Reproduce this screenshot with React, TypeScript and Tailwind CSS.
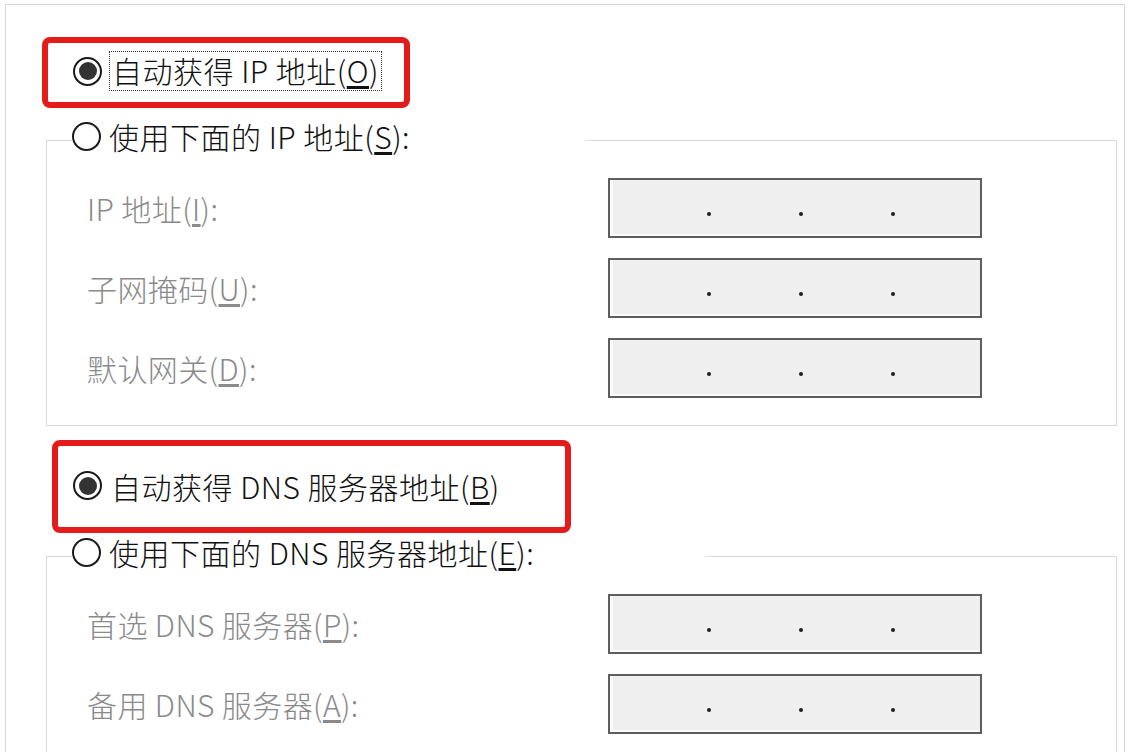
import React from "react";

const font = { fontFamily: '"Noto Sans CJK SC", "Noto Sans", sans-serif' };

function Radio({ checked }: { checked?: boolean }) {
  return (
    <span className="flex h-[29px] w-[29px] shrink-0 items-center justify-center rounded-full border-2 border-[#1a1a1a] bg-white">
      {checked && <span className="h-[18px] w-[18px] rounded-full bg-[#333]" />}
    </span>
  );
}

function IpBox() {
  return (
    <div className="flex h-[60px] w-[374px] items-center gap-[88px] border-2 border-[#5e5e5e] bg-[#efefef] pl-[97px] pt-[12px] shadow-[inset_3px_-2px_0_#fafafa]">
      <span className="h-[4px] w-[4px] rounded-full bg-[#1e1e1e]" />
      <span className="h-[4px] w-[4px] rounded-full bg-[#1e1e1e]" />
      <span className="h-[4px] w-[4px] rounded-full bg-[#1e1e1e]" />
    </div>
  );
}

function Field({ label, keyChar }: { label: string; keyChar: string }) {
  return (
    <div className="flex items-center pl-[15px]">
      <span className="w-[521px] text-[30px] font-light leading-none tracking-[0.4px] text-[#8a8a8a]">
        {label}(<span className="underline underline-offset-[3px]">{keyChar}</span>):
      </span>
      <IpBox />
    </div>
  );
}

function Group({
  legend,
  keyChar,
  legendWidth,
  fields,
}: {
  legend: string;
  keyChar: string;
  legendWidth: string;
  fields: { label: string; key: string }[];
}) {
  return (
    <fieldset className="ml-[40px] w-[1071px] border border-[#dadada] pb-[27px] pl-[25px] pt-[15px]">
      <legend className={`flex h-[46px] items-center gap-[8px] bg-white pb-[8px] ${legendWidth}`}>
        <Radio />
        <span className="text-[30px] font-light leading-none tracking-[0.5px] text-[#111]">
          {legend}(<span className="underline underline-offset-[3px]">{keyChar}</span>):
        </span>
      </legend>
      <div className="flex flex-col gap-[20px]">
        {fields.map((f) => (
          <Field key={f.key} label={f.label} keyChar={f.key} />
        ))}
      </div>
    </fieldset>
  );
}

export default function App() {
  return (
    <div className="relative h-[752px] w-[1128px] overflow-hidden bg-white pl-[5px] pr-[3px] pt-[4px]" style={font}>
      <div className="h-[800px] border-l border-r border-t border-[#d6d6d6]">
        {/* IP section */}
        <div className="mt-[46px] flex h-[40px] items-center gap-[7px] pl-[67px]">
          <Radio checked />
          <span className="flex h-[40px] items-center border border-dotted border-[#333] px-[2px] pb-[2px] text-[30px] font-light leading-none tracking-[0.5px] text-[#111]">
            自动获得 IP 地址(<span className="underline underline-offset-[3px]">O</span>)
          </span>
        </div>
        <div className="mt-[26px]">
          <Group
            legend="使用下面的 IP 地址"
            keyChar="S"
            legendWidth="w-[513px]"
            fields={[
              { label: "IP 地址", key: "I" },
              { label: "子网掩码", key: "U" },
              { label: "默认网关", key: "D" },
            ]}
          />
        </div>

        {/* DNS section */}
        <div className="mt-[41px] flex h-[40px] items-center gap-[9px] pb-[3px] pl-[67px]">
          <Radio checked />
          <span className="text-[30px] font-light leading-none tracking-[0.5px] text-[#111]">
            自动获得 DNS 服务器地址(<span className="underline underline-offset-[3px]">B</span>)
          </span>
        </div>
        <div className="mt-[26px]">
          <Group
            legend="使用下面的 DNS 服务器地址"
            keyChar="E"
            legendWidth="w-[633px]"
            fields={[
              { label: "首选 DNS 服务器", key: "P" },
              { label: "备用 DNS 服务器", key: "A" },
            ]}
          />
        </div>
      </div>

      {/* red annotation boxes */}
      <div className="absolute left-[42px] top-[37px] h-[71px] w-[368px] rounded-[8px] border-[6px] border-[#e41b1b]" />
      <div className="absolute left-[52px] top-[440px] h-[93px] w-[519px] rounded-[8px] border-[6px] border-[#e41b1b]" />
    </div>
  );
}
